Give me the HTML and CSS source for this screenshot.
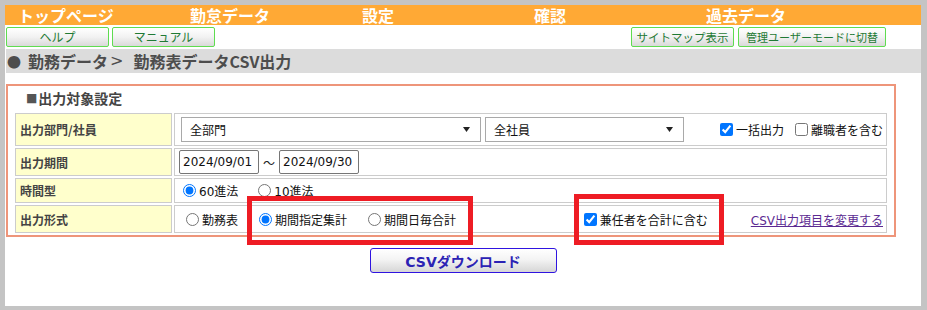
FILE: index.html
```html
<!DOCTYPE html>
<html lang="ja">
<head>
<meta charset="utf-8">
<title>勤務表データCSV出力</title>
<link rel="stylesheet" href="styles.css">
</head>
<body>
<div class="page">
  <nav class="gnav">
    <a class="gnav-item">トップページ</a>
    <a class="gnav-item">勤怠データ</a>
    <a class="gnav-item">設定</a>
    <a class="gnav-item">確認</a>
    <a class="gnav-item">過去データ</a>
  </nav>
  <div class="toolbar">
    <div class="btn-group">
      <button class="gbtn gbtn-std">ヘルプ</button>
      <button class="gbtn gbtn-std">マニュアル</button>
    </div>
    <div class="btn-group">
      <button class="gbtn gbtn-std gbtn-tight">サイトマップ表示</button>
      <button class="gbtn gbtn-wide">管理ユーザーモードに切替</button>
    </div>
  </div>
  <div class="crumb"><span class="crumb-dot">●</span><span>勤務データ</span><span class="crumb-sep">&gt;</span><span>勤務表データCSV出力</span></div>

  <section class="panel">
    <h2 class="panel-title"><span class="sq">■</span>出力対象設定</h2>
    <table class="form">
      <tr class="r1">
        <td class="lbl">出力部門/社員</td>
        <td class="val">
          <div class="row row-sel">
            <select class="sel sel-dept"><option>全部門</option></select>
            <select class="sel sel-emp"><option>全社員</option></select>
            <div class="checks">
              <label class="chk"><input type="checkbox" checked>一括出力</label>
              <label class="chk"><input type="checkbox">離職者を含む</label>
            </div>
          </div>
        </td>
      </tr>
      <tr class="r2">
        <td class="lbl">出力期間</td>
        <td class="val">
          <div class="row row-date">
            <input class="date" type="text" value="2024/09/01">
            <span class="tilde">～</span>
            <input class="date" type="text" value="2024/09/30">
          </div>
        </td>
      </tr>
      <tr class="r3">
        <td class="lbl">時間型</td>
        <td class="val">
          <div class="row row-time">
            <label class="chk"><input type="radio" name="tt" checked>60進法</label>
            <label class="chk"><input type="radio" name="tt">10進法</label>
          </div>
        </td>
      </tr>
      <tr class="r4">
        <td class="lbl">出力形式</td>
        <td class="val">
          <div class="row row-fmt">
            <label class="chk"><input type="radio" name="fmt">勤務表</label>
            <label class="chk"><input type="radio" name="fmt" checked>期間指定集計</label>
            <label class="chk"><input type="radio" name="fmt">期間日毎合計</label>
            <div class="fmt-right">
              <label class="chk"><input type="checkbox" checked>兼任者を合計に含む</label>
              <a class="link" href="#">CSV出力項目を変更する</a>
            </div>
          </div>
        </td>
      </tr>
    </table>
  </section>

  <div class="actions">
    <button class="dl-btn">CSVダウンロード</button>
  </div>

  <div class="mark mark-1"></div>
  <div class="mark mark-2"></div>
</div>
</body>
</html>
```

FILE: styles.css
```css
* { box-sizing: border-box; }
html, body { height: 100%; }
body {
  margin: 0;
  padding: 5px 6px 0 5px;
  background: #c4c4c4;
  font-family: "Noto Sans CJK JP", sans-serif;
  color: #222;
  overflow: hidden;
}
.page {
  position: relative;
  width: 916px;
  height: 301px;
  background: #fff;
}

/* global nav */
.gnav {
  display: grid;
  grid-template-columns: repeat(5, 172px);
  height: 20px;
  padding-left: 13px;
  background: #ffa935;
}
.gnav-item {
  color: #fff;
  font-weight: bold;
  font-size: 16px;
  line-height: 20px;
  white-space: nowrap;
}

/* toolbar */
.toolbar {
  display: flex;
  justify-content: space-between;
  margin-top: 2px;
  padding: 0 35px 0 1px;
}
.btn-group { display: flex; gap: 3px; }
.btn-group + .btn-group { gap: 4px; }
.gbtn {
  height: 20px;
  padding: 0;
  border: 1px solid #5fdc50;
  border-radius: 2px;
  background: linear-gradient(#ffffff 0%, #f2f2f2 50%, #d9d9d9 100%);
  color: #1f7a35;
  font-family: "Noto Sans CJK JP", sans-serif;
  font-size: 12px;
  line-height: 18px;
  white-space: nowrap;
}
.gbtn-std { width: 103px; }
.gbtn-tight { font-size: 11.5px; }
.gbtn-wide { width: 148px; font-size: 11px; }

/* breadcrumb */
.crumb {
  display: flex;
  align-items: center;
  margin: 2px 0 0 1px;
  height: 24px;
  background: #dcdcdc;
  color: #4d4d4d;
  font-size: 16px;
  font-weight: bold;
  line-height: 24px;
  white-space: nowrap;
}
.crumb-dot {
  font-size: 14px;
  margin: 0 7px 0 1px;
}
.crumb-sep {
  font-family: "DejaVu Sans", sans-serif;
  font-weight: normal;
  margin: 0 10px 0 2px;
}

/* panel */
.panel {
  width: 890px;
  margin: 11px 0 0 1px;
  border: 2px solid #ee957a;
  padding: 0 4px 0 5px;
}
.panel-title {
  margin: 0;
  height: 25px;
  padding-left: 13px;
  font-size: 14px;
  font-weight: bold;
  line-height: 25px;
  color: #444;
  display: flex;
  align-items: center;
}
.sq {
  font-family: "DejaVu Sans", sans-serif;
  font-size: 12px;
  margin-right: 1px;
  color: #555;
}

.form {
  width: 876px;
  table-layout: fixed;
  border-collapse: separate;
  border-spacing: 2px;
  font-family: "DejaVu Sans", "Noto Sans CJK JP", sans-serif;
  font-size: 12px;
}
.form td {
  border: 1px solid #cccccc;
  padding: 0;
  vertical-align: middle;
}
.form .lbl {
  width: 157px;
  background: #ffffcc;
  padding-left: 4px;
  font-weight: bold;
  color: #444;
  font-family: "Noto Sans CJK JP", sans-serif;
}
.r1 td { height: 33px; }
.r2 td { height: 28px; }
.r3 td { height: 25px; }
.r4 td { height: 28px; }

.row { display: flex; align-items: center; white-space: nowrap; }
.row-sel { padding: 0 3px 0 6px; gap: 4px; }
.row-date { padding-left: 4px; }
.row-time { padding-left: 8px; gap: 20px; }
.row-fmt { padding: 0 3px 0 11px; }
.row-fmt > .chk + .chk { margin-left: 21px; }

.sel {
  appearance: none;
  -webkit-appearance: none;
  height: 25px;
  border: 1px solid #a9a9a9;
  border-radius: 0;
  padding: 0 0 0 8px;
  font-family: "Noto Sans CJK JP", sans-serif;
  font-size: 12px;
  color: #111;
  background: #fff url("data:image/svg+xml,%3Csvg xmlns='http://www.w3.org/2000/svg' width='7' height='5'%3E%3Cpath d='M0 0h7L3.5 5z' fill='%23222'/%3E%3C/svg%3E") no-repeat right 10px center;
}
.sel-dept { width: 300px; }
.sel-emp { width: 199px; }

.checks { display: flex; gap: 11px; margin-left: auto; }

.chk {
  display: inline-flex;
  align-items: center;
  color: #111;
}
.chk input {
  width: 13px;
  height: 13px;
  margin: 0 3px 0 0;
}

.date {
  width: 80px;
  height: 24px;
  border: 1px solid #767676;
  border-radius: 2px;
  padding: 0 3px;
  font-family: "DejaVu Sans", sans-serif;
  font-size: 12px;
  color: #111;
}
.tilde {
  margin: 0 4px;
  font-family: "Noto Sans CJK JP", sans-serif;
}

.fmt-right {
  display: flex;
  align-items: center;
  gap: 43px;
  margin-left: auto;
}
.link {
  color: #5b2a92;
  text-decoration: underline;
}

/* download */
.actions {
  display: flex;
  justify-content: center;
  margin-top: 11px;
}
.dl-btn {
  width: 187px;
  height: 25px;
  padding: 0;
  border: 1px solid #2f14e0;
  border-radius: 3px;
  background: linear-gradient(#ffffff 0%, #f4f4f4 45%, #d6d6d6 100%);
  color: #2b22b4;
  font-family: "DejaVu Sans", "Noto Sans CJK JP", sans-serif;
  font-size: 14px;
  font-weight: bold;
}

/* annotation boxes */
.mark {
  position: absolute;
  border: 5px solid #ee1c24;
  pointer-events: none;
}
.mark-1 { left: 242px; top: 191px; width: 226px; height: 49px; }
.mark-2 { left: 569px; top: 189px; width: 150px; height: 51px; }
```
